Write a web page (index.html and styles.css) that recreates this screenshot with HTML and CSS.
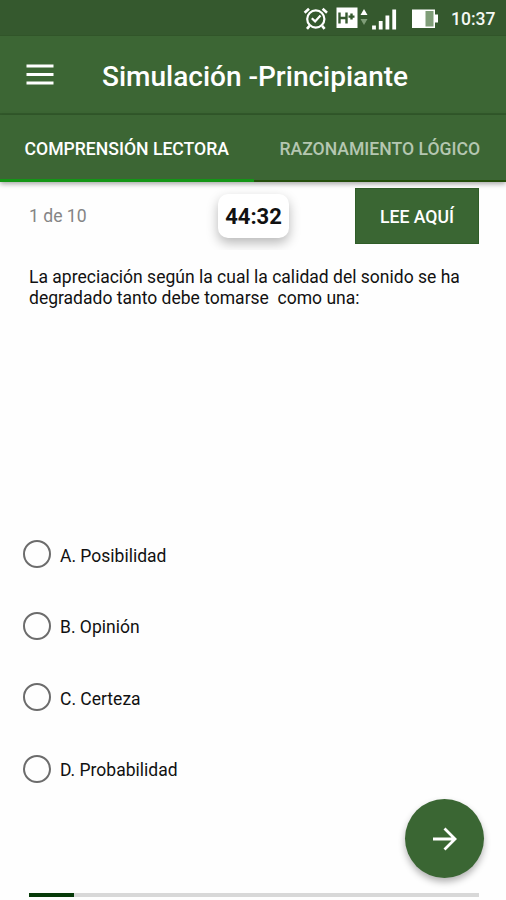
FILE: index.html
```html
<!DOCTYPE html>
<html lang="es">
<head>
<meta charset="utf-8">
<title>Simulación</title>
<link rel="stylesheet" href="styles.css">
</head>
<body>
<div class="screen">
  <div class="status">
    <svg class="status-icons" width="140" height="36" viewBox="0 0 140 36" fill="none" stroke="#fff">
      <circle cx="15.8" cy="19" r="8.6" stroke-width="2.2"/>
      <path d="M4.600 12.800 9 8.800M27 12.800l-4.400-4M9.500 25.800 7 28.800M22.100 25.800l2.500 3" stroke-width="2.600"/>
      <path d="m11.800 18.200 3.300 3.200 5.400-5.800" stroke-width="2.200"/>
      <rect x="36.500" y="7.500" width="21" height="20.500" fill="#fff" stroke="none"/>
      <path d="M39.500 12.500v11M46.500 12.500v11M39.500 18h7M48.500 16.600h6M51.500 13.600v6" stroke="#35592e" stroke-width="2.400"/>
      <path d="m60.500 15 3.500-6 3.500 6z" fill="#fff" stroke="none"/>
      <path d="m60.500 19 3.500 6 3.500-6z" fill="#7f9d78" stroke="none"/>
      <path d="M74 29.500v-4M80.700 29.500v-8.500M87.400 29.500v-14M94.200 29.500v-20" stroke-width="3.800"/>
      <path d="M112 9.500h23v5h3v8h-3v5.500h-23z" fill="#fff" stroke="none"/>
      <rect x="125.500" y="11" width="8" height="15.500" fill="#7f9d78" stroke="none"/>
    </svg>
    <span class="clock">10:37</span>
  </div>
  <header class="appbar">
    <svg class="menu" width="28" height="22" viewBox="0 0 28 22" fill="none" stroke="#fff" stroke-width="2.900"><path d="M.5 3h27M.5 11.500h27M.5 20h27"/></svg>
    <h1 class="title">Simulación -Principiante</h1>
  </header>
  <nav class="tabs">
    <div class="tab active">COMPRENSIÓN LECTORA</div>
    <div class="tab">RAZONAMIENTO LÓGICO</div>
  </nav>
  <main class="content">
    <div class="toolbar">
      <span class="count">1 de 10</span>
      <div class="timer-wrap"><div class="timer">44:32</div></div>
      <button class="read">LEE AQUÍ</button>
    </div>
    <p class="question">La apreciación según la cual la calidad del sonido se ha
degradado tanto debe tomarse  como una:</p>
    <div class="options">
      <div class="option"><i class="radio"></i><span>A. Posibilidad</span></div>
      <div class="option"><i class="radio"></i><span>B. Opinión</span></div>
      <div class="option"><i class="radio"></i><span>C. Certeza</span></div>
      <div class="option"><i class="radio"></i><span>D. Probabilidad</span></div>
    </div>
    <div class="progress"><div class="bar" style="width:10%"></div></div>
  </main>
  <button class="fab" aria-label="Siguiente">
    <svg width="26" height="26" viewBox="0 0 26 26" fill="none" stroke="#fff" stroke-width="2.800"><path d="M1 13h22M12.500 2.500 23 13 12.500 23.500"/></svg>
  </button>
</div>
</body>
</html>
```

FILE: styles.css
```css
* { box-sizing: border-box; }
body { margin: 0; font-family: Roboto, "Liberation Sans", sans-serif; background: #fefefe; color: #111; }
button { border: 0; padding: 0; font: inherit; color: #fff; background: #3a6633; }
.screen { position: relative; width: 506px; height: 900px; overflow: hidden; display: flex; flex-direction: column; }
.status { height: 36px; background: #35592e; display: flex; align-items: center; padding-left: 300px; border-bottom: 1px solid #315529; flex: none; }
.clock { color: #f4f8f3; font-size: 17.5px; font-weight: 500; margin: 2px 0 0 11px; }
.appbar { height: 79px; flex: none; background: #3c6634; display: flex; align-items: center; padding-left: 26px; border-bottom: 2px solid #325a2b; }
.menu { margin-top: -1px; }
.title { margin: 4px 0 0 48px; font-size: 28px; font-weight: 500; color: #fff; white-space: nowrap; }
.tabs { height: 67px; flex: none; background: #3c6634; display: flex; box-shadow: 0 2px 5px rgba(0,0,0,.35); position: relative; }
.tab { width: 253px; display: flex; align-items: center; justify-content: center; padding-top: 3px; border-bottom: 2px solid #244e0c; font-size: 17.6px; font-weight: 500; color: #b5c7b1; white-space: nowrap; }
.tab.active { width: 254px; padding-top: 4px; color: #fff; border-bottom: 3px solid #149516; }
.content { flex: 1; display: flex; flex-direction: column; padding: 6px 27px 3px 29px; }
.toolbar { height: 62px; display: flex; align-items: flex-start; }
.count { width: 177px; padding-top: 17px; font-size: 17.6px; line-height: 22px; color: #858585; }
.timer-wrap { width: 110px; height: 62px; overflow: hidden; padding: 6px 0 0 12px; }
.timer { width: 71px; height: 44px; border-radius: 10px; background: #fff; box-shadow: 0 5px 12px rgba(0,0,0,.28); font-size: 22px; font-weight: 700; line-height: 46px; text-align: center; }
.read { width: 124px; height: 56px; margin-left: auto; padding-top: 1px; font-size: 17.6px; font-weight: 500; border: 1px solid #2f5d28; }
.question { margin: 17px 0 0; height: 41px; font-size: 17.53px; line-height: 20.5px; white-space: pre; }
.options { margin-top: 210.7px; }
.option { height: 71.4px; display: flex; align-items: center; margin-left: -6px; font-size: 17.5px; }
.option span { margin: 3px 0 0 9px; }
.radio { width: 28px; height: 28px; border: 2.5px solid #6c6c6c; border-radius: 50%; }
.progress { height: 4px; margin-top: auto; background: #d8d8d8; }
.bar { height: 4px; background: #073a09; }
.fab { position: absolute; left: 405px; top: 799px; width: 79px; height: 79px; border-radius: 50%; display: flex; align-items: center; justify-content: center; box-shadow: 0 4px 7px rgba(0,0,0,.3); }
```
